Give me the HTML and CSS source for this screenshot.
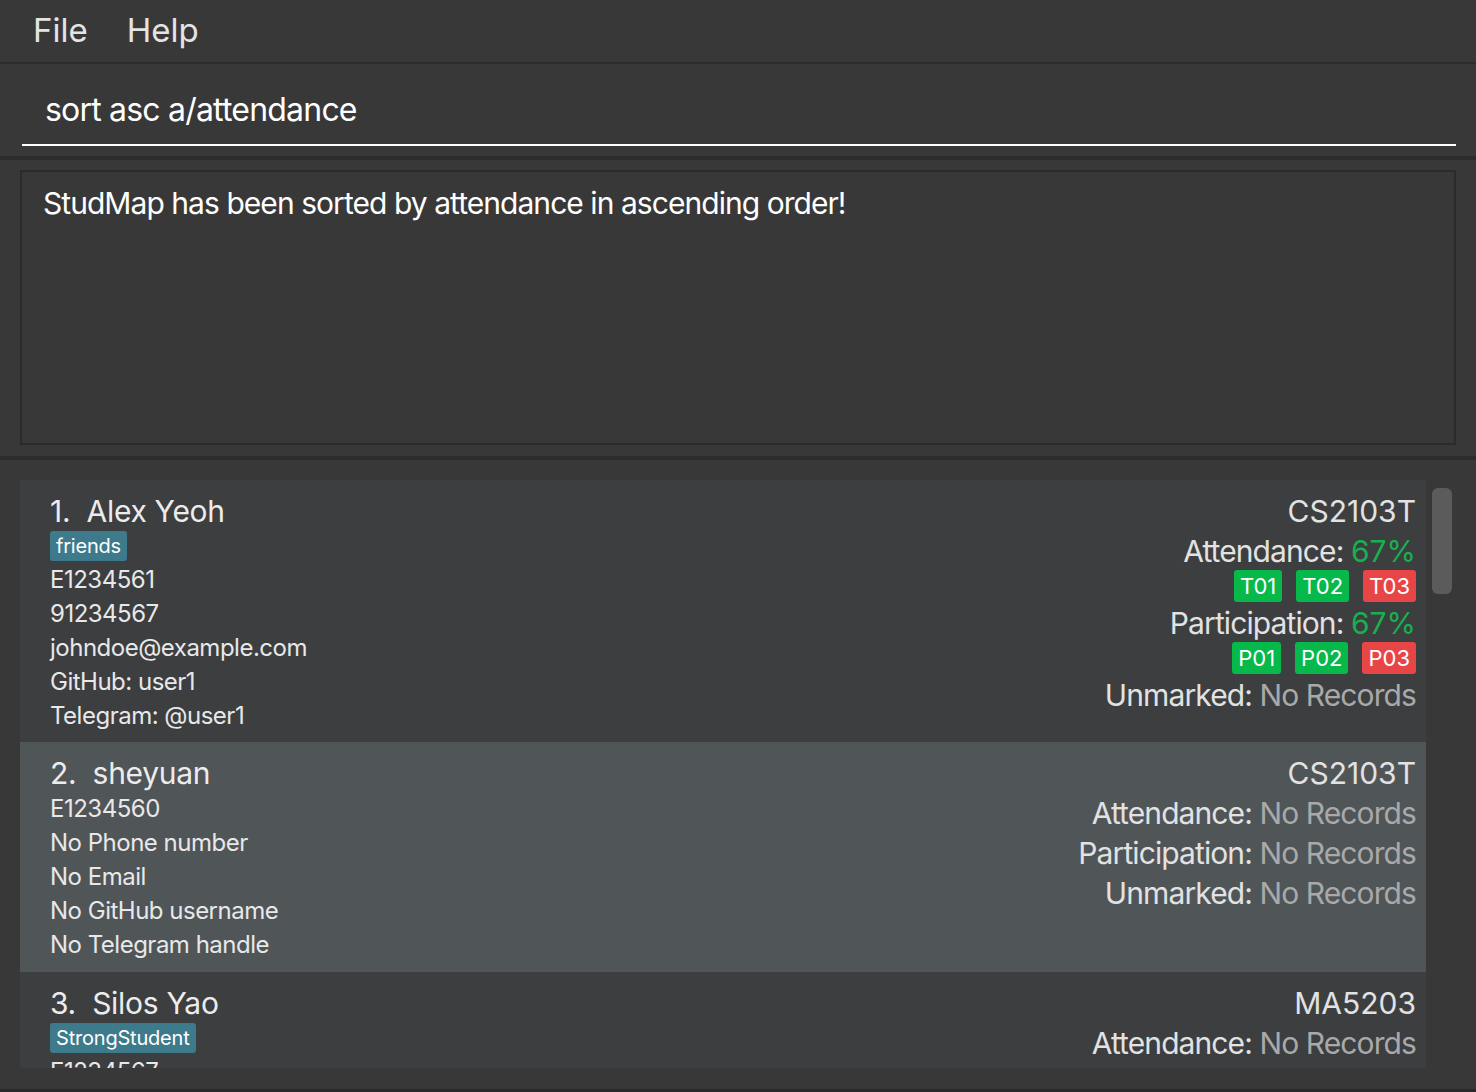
FILE: index.html
```html
<!DOCTYPE html>
<html>
<head>
<meta charset="utf-8">
<link rel="stylesheet" href="styles.css">
</head>
<body>
<div class="menubar">
  <span class="menu-item">File</span>
  <span class="menu-item">Help</span>
</div>
<div class="sep sep-thin"></div>
<div class="command">
  <div class="cmd-line">sort asc a/attendance</div>
</div>
<div class="sep"></div>
<div class="result">
  <div class="result-box">StudMap has been sorted by attendance in ascending order!</div>
</div>
<div class="sep"></div>
<div class="list-area">
  <div class="list">
    <div class="card">
      <div class="left">
        <div class="name">1.&nbsp; Alex Yeoh</div>
        <div class="tags"><span class="tag">friends</span></div>
        <div class="line">E1234561</div>
        <div class="line">91234567</div>
        <div class="line">johndoe@example.com</div>
        <div class="line">GitHub: user1</div>
        <div class="line">Telegram: @user1</div>
      </div>
      <div class="right">
        <div class="rline code">CS2103T</div>
        <div class="rline">Attendance: <span class="good">67%</span></div>
        <div class="badges"><span class="badge ok">T01</span><span class="badge ok">T02</span><span class="badge bad">T03</span></div>
        <div class="rline">Participation: <span class="good">67%</span></div>
        <div class="badges"><span class="badge ok">P01</span><span class="badge ok">P02</span><span class="badge bad">P03</span></div>
        <div class="rline">Unmarked: <span class="none">No Records</span></div>
      </div>
    </div>
    <div class="card alt">
      <div class="left">
        <div class="name">2.&nbsp; sheyuan</div>
        <div class="line">E1234560</div>
        <div class="line">No Phone number</div>
        <div class="line">No Email</div>
        <div class="line">No GitHub username</div>
        <div class="line">No Telegram handle</div>
      </div>
      <div class="right">
        <div class="rline code">CS2103T</div>
        <div class="rline">Attendance: <span class="none">No Records</span></div>
        <div class="rline">Participation: <span class="none">No Records</span></div>
        <div class="rline">Unmarked: <span class="none">No Records</span></div>
      </div>
    </div>
    <div class="card">
      <div class="left">
        <div class="name">3.&nbsp; Silos Yao</div>
        <div class="tags"><span class="tag">StrongStudent</span></div>
        <div class="line">E1234567</div>
        <div class="line">No Phone number</div>
      </div>
      <div class="right">
        <div class="rline code">MA5203</div>
        <div class="rline">Attendance: <span class="none">No Records</span></div>
        <div class="rline">Participation: <span class="none">No Records</span></div>
      </div>
    </div>
  </div>
  <div class="scroll-track"><div class="scroll-thumb"></div></div>
</div>
<div class="sep sep-bottom"></div>
</body>
</html>
```

FILE: styles.css
```css
html, body {
  margin: 0;
  padding: 0;
}
body {
  background: #383838;
  font-family: Inter, "Noto Sans", "Liberation Sans", sans-serif;
  color: #e8e8e8;
  width: 1476px;
  height: 1092px;
  overflow: hidden;
}
.menubar {
  height: 62px;
  display: flex;
  align-items: center;
  padding-left: 33px;
  padding-bottom: 2px;
  box-sizing: border-box;
  gap: 39px;
}
.menu-item {
  font-size: 33px;
  color: #e4e4e4;
}
.sep {
  height: 4px;
  background: #2c2c2c;
}
.sep-thin {
  height: 2px;
}
.command {
  height: 92px;
  box-sizing: border-box;
  padding: 26px 20px 0 22px;
}
.cmd-line {
  font-size: 32px;
  line-height: 40px;
  color: #ffffff;
  padding: 0 0 14px 23px;
  border-bottom: 2px solid #ffffff;
  letter-spacing: -0.8px;
}
.result {
  height: 296px;
  box-sizing: border-box;
  padding: 10px 20px 11px 20px;
}
.result-box {
  height: 100%;
  box-sizing: border-box;
  border: 2px solid #2b2b2b;
  padding: 13px 21px;
  font-size: 30px;
  line-height: 36px;
  color: #ffffff;
  letter-spacing: -0.95px;
}
.list-area {
  height: 629px;
  box-sizing: border-box;
  padding: 20px 0 21px 20px;
  display: flex;
}
.list {
  width: 1406px;
  height: 588px;
  overflow: hidden;
}
.scroll-track {
  margin-left: 6px;
  padding-top: 8px;
}
.scroll-thumb {
  width: 20px;
  height: 106px;
  border-radius: 6px;
  background: #5b5b5b;
}
.sep-bottom {
  height: 3px;
  background: #2a2a2a;
}
.card {
  background: #3c3e40;
  display: flex;
  justify-content: space-between;
  padding: 11px 10px 9px 30px;
}
.card.alt {
  background: #505558;
  padding-bottom: 10px;
}
.left {
  padding-top: 1px;
}
.name {
  font-size: 30px;
  line-height: 38px;
  color: #ececec;
  letter-spacing: -0.3px;
}
.tags {
  margin: 1px 0 2px;
  display: flex;
}
.tag {
  display: inline-block;
  height: 30px;
  line-height: 30px;
  padding: 0 6px;
  background: #3d7a8c;
  color: #ffffff;
  font-size: 20px;
  border-radius: 3px;
  letter-spacing: -0.2px;
}
.line {
  font-size: 24px;
  line-height: 34px;
  color: #e8e8e8;
  letter-spacing: -0.5px;
}
.right {
  text-align: right;
  display: flex;
  flex-direction: column;
  align-items: flex-end;
}
.rline {
  font-size: 30px;
  line-height: 40px;
  color: #e2e2e2;
  letter-spacing: -0.9px;
}
.rline.code {
  letter-spacing: 0;
}
.good {
  color: #18b04f;
  letter-spacing: 0;
}
.none {
  color: #a9a9a9;
}
.badges {
  display: flex;
  gap: 14px;
  margin: -1px 0 1px;
}
.badge {
  display: inline-block;
  height: 32px;
  line-height: 32px;
  padding: 0 6px;
  font-size: 22px;
  color: #ffffff;
  border-radius: 3px;
}
.badge.ok {
  background: #07b84b;
}
.badge.bad {
  background: #e84646;
}
```
